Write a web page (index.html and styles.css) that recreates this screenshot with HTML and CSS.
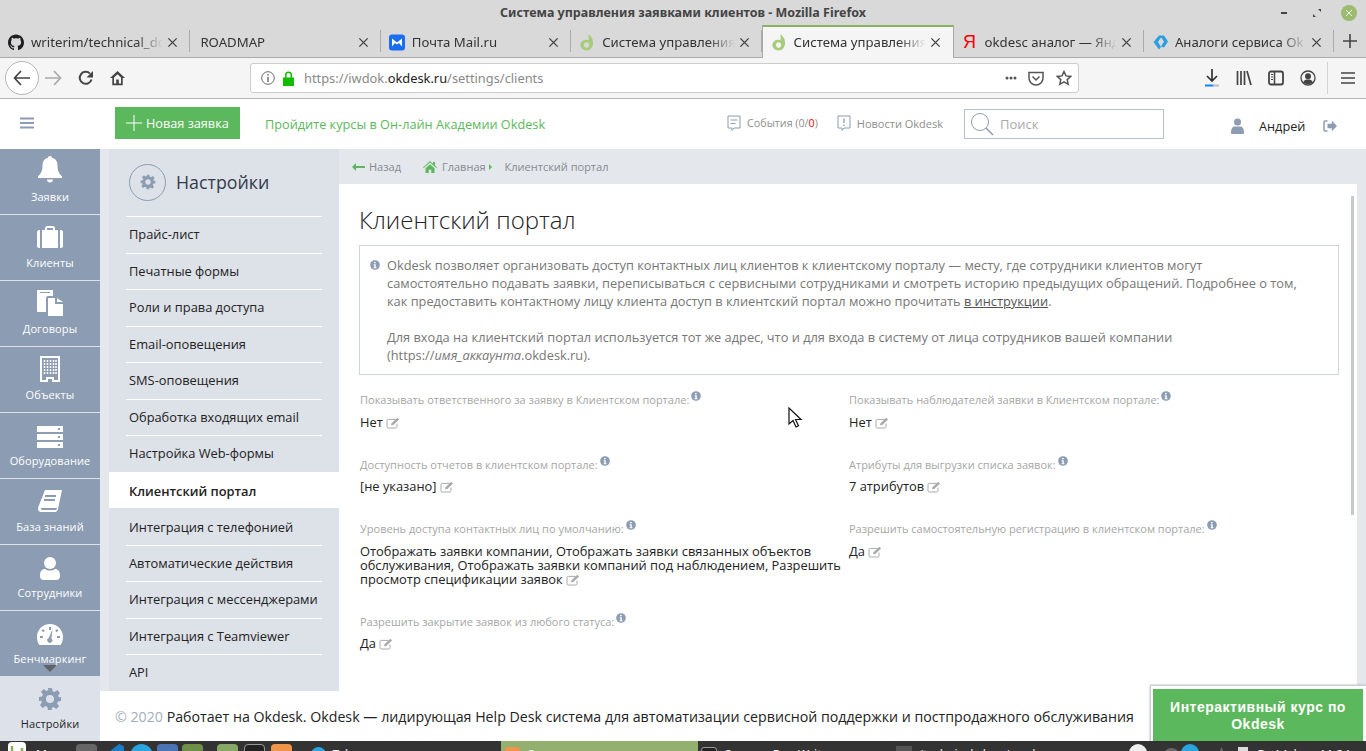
FILE: index.html
```html
<!DOCTYPE html>
<html lang="ru">
<head>
  <meta charset="UTF-8">
  <title>Система управления заявками клиентов</title>
  <link rel="stylesheet" href="styles.css">
</head>
<body>
  <svg class="sprite" width="0" height="0">
    <symbol id="i-close" viewBox="0 0 12 12"><path d="M1.5 1.5l9 9M10.5 1.5l-9 9" fill="none" stroke="currentColor" stroke-width="1.5"/></symbol>
    <symbol id="i-okdesk" viewBox="0 0 16 18"><path d="M9.5 0c1.800 1.600 5 4.600 5 9.300 0 4.700-3 8.200-7 8.200C4 17.500 1 15 1 11.700 1 8.300 4 6 7 6c1 0 1.900.2 2.600.7C9.900 4.500 9.700 2.300 9.500 0zM7.500 8.800c-1.500 0-2.700 1.300-2.700 2.900 0 1.700 1.200 3 2.800 3 1.500 0 2.700-1.300 2.700-3 0-1.600-1.200-2.900-2.800-2.900z" fill="#a9cc7c"/></symbol>
    <symbol id="i-info" viewBox="0 0 12 12"><circle cx="6" cy="6" r="5.800" fill="#8c9cb3"/><path d="M4.800 2.300h2v1.700h-2zM4.300 5h2.600v3.800h.9V10H4.300V8.800h.9V6.200h-.9z" fill="#fff"/></symbol>
    <symbol id="i-edit" viewBox="0 0 14 12"><path d="M9.800 2.400H2.300C1.500 2.400 1 2.900 1 3.700v6c0 .8.500 1.300 1.300 1.300h7.400c.8 0 1.300-.5 1.300-1.300V6.500" fill="none" stroke="#aaa"/><path d="M5 8.300l.5-2L11.300.8l1.800 1.700-5.800 5.400z" fill="#aaa"/></symbol>
    <symbol id="i-gear" viewBox="0 0 24 24"><path fill-rule="evenodd" d="M10 1h4l.6 3.200 1.900.8 2.700-1.900 2.800 2.800-1.900 2.700.8 1.900L23 10v4l-3.100.6-.8 1.900 1.900 2.700-2.800 2.800-2.700-1.900-1.900.8L13.900 23h-3.900l-.6-3.100-1.900-.8-2.700 1.900-2.800-2.800 1.900-2.700-.8-1.900L1 14v-4l3.100-.6.800-1.900L3 4.800 5.800 2l2.700 1.900 1.900-.8zM12 8a4 4 0 1 0 0 8 4 4 0 0 0 0-8z"/></symbol>
  </svg>

  <div class="titlebar">
    <span></span>
    <span class="titlebar-text">Система управления заявками клиентов - Mozilla Firefox</span>
    <div class="win-controls">
      <span class="win-min"></span>
      <svg class="win-restore" width="10" height="10" viewBox="0 0 10 10"><path d="M6 1h3v3zM4 9H1V6z" fill="#444"/></svg>
      <span class="win-close"><svg width="12" height="12"><use href="#i-close"/></svg></span>
    </div>
  </div>

  <div class="tabs">
    <div class="tab">
      <svg class="tab-icon" viewBox="0 0 16 16"><path fill="#1b1f23" d="M8 0C3.580 0 0 3.580 0 8c0 3.540 2.290 6.530 5.470 7.590.4.070.55-.17.55-.38 0-.19-.01-.82-.01-1.490-2.010.37-2.530-.49-2.690-.94-.09-.23-.48-.94-.82-1.130-.28-.15-.68-.52-.01-.53.63-.01 1.080.58 1.230.82.720 1.210 1.870.870 2.330.660.070-.520.280-.870.510-1.070-1.780-.2-3.640-.890-3.640-3.950 0-.870.310-1.590.820-2.150-.080-.2-.360-1.020.080-2.120 0 0 .670-.210 2.200.820.640-.180 1.320-.270 2-.270s1.360.090 2 .270c1.530-1.040 2.200-.820 2.200-.820.440 1.100.160 1.920.080 2.120.510.560.820 1.270.820 2.150 0 3.070-1.870 3.750-3.650 3.950.290.250.540.730.540 1.480 0 1.070-.010 1.930-.010 2.200 0 .210.150.460.550.380A8.010 8.010 0 0 0 16 8c0-4.420-3.580-8-8-8z"/></svg>
      <span class="tab-title">writerim/technical_do</span>
      <svg class="tab-close"><use href="#i-close"/></svg>
    </div>
    <div class="tab tab-noicon">
      <span class="tab-title">ROADMAP</span>
      <svg class="tab-close"><use href="#i-close"/></svg>
    </div>
    <div class="tab">
      <svg class="tab-icon" viewBox="0 0 16 16"><rect width="16" height="16" rx="3" fill="#1a6cf0"/><path d="M3 4l5 4 5-4v8l-3-3.500L8 10 6 8.500 3 12z" fill="#fff"/></svg>
      <span class="tab-title">Почта Mail.ru</span>
      <svg class="tab-close"><use href="#i-close"/></svg>
    </div>
    <div class="tab">
      <svg class="tab-icon"><use href="#i-okdesk"/></svg>
      <span class="tab-title">Система управления</span>
      <svg class="tab-close"><use href="#i-close"/></svg>
    </div>
    <div class="tab tab-active">
      <svg class="tab-icon"><use href="#i-okdesk"/></svg>
      <span class="tab-title">Система управления</span>
      <svg class="tab-close"><use href="#i-close"/></svg>
    </div>
    <div class="tab tab-after-active">
      <span class="tab-icon tab-yandex">Я</span>
      <span class="tab-title">okdesc аналог — Янд</span>
      <svg class="tab-close"><use href="#i-close"/></svg>
    </div>
    <div class="tab">
      <svg class="tab-icon" viewBox="0 0 16 16"><path d="M7 1h5l4 6-4 6-3-1 3-5-2.500-3.500H8.500L6 7.500l3 5-2 2.500L1.500 7.500z" fill="#2b9fe0"/></svg>
      <span class="tab-title">Аналоги сервиса Ok</span>
      <svg class="tab-close"><use href="#i-close"/></svg>
    </div>
    <div class="tab-new">
      <svg width="14" height="14" viewBox="0 0 14 14"><path d="M7 0v14M0 7h14" stroke="#444" stroke-width="1.600"/></svg>
    </div>
  </div>

  <div class="toolbar">
    <button class="nav-back">
      <svg width="18" height="16" viewBox="0 0 18 16"><path d="M8 1L1.500 8 8 15M1.500 8H17" fill="none" stroke="#444" stroke-width="1.700"/></svg>
    </button>
    <svg class="nav-forward" width="18" height="16" viewBox="0 0 18 16"><path d="M10 1l6.500 7L10 15M16.500 8H1" fill="none" stroke="#aaa" stroke-width="1.700"/></svg>
    <svg class="nav-reload" width="16" height="16" viewBox="0 0 16 16"><path d="M13.500 9.500A6 6 0 1 1 12 3.600" fill="none" stroke="#444" stroke-width="2"/><path d="M15 1v6.500H8.500z" fill="#444"/></svg>
    <svg class="nav-home" width="17" height="16" viewBox="0 0 17 16"><path d="M8.500 1L1 8h2.300v7.200h10.400V8H16zM5 13.500V7.500l3.500-3.300L12 7.500v6H9.800V9.500H7.200v4z" fill="#444" fill-rule="evenodd"/></svg>

    <div class="urlbar">
      <svg class="url-info" width="14" height="14" viewBox="0 0 14 14"><circle cx="7" cy="7" r="6.300" fill="none" stroke="#666"/><path d="M6.300 3h1.400v1.400H6.300zM6.300 5.800h1.400V11H6.300z" fill="#666"/></svg>
      <svg class="url-lock" width="13" height="15" viewBox="0 0 13 15"><path d="M1 6.500h11V15H1zM3 6.500V4a3.500 3.500 0 0 1 7 0v2.500H8.500V4a2 2 0 0 0-4 0v2.500z" fill="#12bc00"/></svg>
      <span class="url-text">https://iwdok.<b>okdesk.ru</b>/settings/clients</span>
      <svg class="url-dots" width="12" height="4" viewBox="0 0 12 4"><circle cx="2" cy="2" r="1.500" fill="#555"/><circle cx="6" cy="2" r="1.500" fill="#555"/><circle cx="10" cy="2" r="1.500" fill="#555"/></svg>
      <svg class="url-pocket" width="16" height="15" viewBox="0 0 16 15"><path d="M1 1.500h14v5.500a7 7 0 0 1-14 0z" fill="none" stroke="#555" stroke-width="1.500"/><path d="M4.500 5.500L8 9l3.500-3.500" fill="none" stroke="#555" stroke-width="1.500"/></svg>
      <svg class="url-star" width="16" height="16" viewBox="0 0 16 16"><path d="M8 1.500l2 4.400 4.800.5-3.600 3.200 1 4.700L8 11.900l-4.200 2.400 1-4.700L1.200 6.400 6 5.900z" fill="none" stroke="#555" stroke-width="1.500"/></svg>
    </div>

    <div class="tool-icons">
      <svg width="16" height="20" viewBox="0 0 16 20"><path d="M8 1v11M3 8l5 5 5-5" fill="none" stroke="#333" stroke-width="1.700"/><path d="M1 17.500h8.500" stroke="#0a84ff" stroke-width="2"/><path d="M9.500 17.500H15" stroke="#bbb" stroke-width="2"/></svg>
      <svg width="16" height="16" viewBox="0 0 16 16"><path d="M1.500 1v14M5 1v14M8.500 1v14M11 1l4 14" fill="none" stroke="#444" stroke-width="1.700"/></svg>
      <svg width="16" height="16" viewBox="0 0 16 16"><rect x="1" y="1.500" width="14" height="13" rx="2" fill="none" stroke="#444" stroke-width="1.800"/><path d="M6.500 2v12" stroke="#444" stroke-width="1.500"/><path d="M3 4.500h2M3 7h2M3 9.500h2" stroke="#444"/></svg>
      <svg width="16" height="16" viewBox="0 0 16 16"><circle cx="8" cy="8" r="7" fill="none" stroke="#444" stroke-width="1.300"/><circle cx="8" cy="6.200" r="3" fill="#444"/><path d="M3 12.500c1-2.500 3-3 5-3s4 .5 5 3c-2.500 2-7.500 2-10 0z" fill="#444"/></svg>
      <span class="tool-sep"></span>
      <svg width="14" height="12" viewBox="0 0 14 12"><path d="M0 1h14M0 6h14M0 11h14" stroke="#444" stroke-width="1.700"/></svg>
    </div>
  </div>

  <div class="app">
    <header class="app-header">
      <svg class="burger" width="14" height="12" viewBox="0 0 14 12"><path d="M0 1.500h14M0 6h14M0 10.500h14" stroke="#8c9cb3" stroke-width="2"/></svg>
      <a class="new-ticket">
        <svg width="16" height="16" viewBox="0 0 16 16"><path d="M8 0v16M0 8h16" stroke="#fff"/></svg>
        Новая заявка
      </a>
      <a class="academy-link">Пройдите курсы в Он-лайн Академии Okdesk</a>
      <a class="head-link head-events">
        <svg width="14" height="17" viewBox="0 0 14 17"><path d="M1 1h12v12H7l-2 2.500V13H1z" fill="none" stroke="#8c9cb3"/><path d="M3.500 5h7M3.500 8.500h5" stroke="#8c9cb3"/></svg>
        <span>События (0/<em>0</em>)</span>
      </a>
      <a class="head-link head-news">
        <svg width="14" height="17" viewBox="0 0 14 17"><path d="M1 1h12v12H7l-2 2.500V13H1z" fill="none" stroke="#8c9cb3"/><path d="M7 3.500V8M7 9.500v1.500" stroke="#8c9cb3" stroke-width="1.300"/></svg>
        <span>Новости Okdesk</span>
      </a>
      <div class="search">
        <svg width="24" height="24" viewBox="0 0 24 24"><circle cx="10" cy="10" r="8.500" fill="none" stroke="#8c9cb3"/><path d="M16 16l7 7" stroke="#8c9cb3" stroke-width="1.500"/></svg>
        <span>Поиск</span>
      </div>
      <svg class="user-icon" width="13" height="16" viewBox="0 0 13 16"><circle cx="6.500" cy="4" r="3.500" fill="#8c9cb3"/><path d="M0 15c0-5 2-6.500 3.500-6.500h6C11 8.500 13 10 13 15c0 .7-.5 1-1 1H1c-.5 0-1-.3-1-1z" fill="#8c9cb3"/></svg>
      <span class="user-name">Андрей</span>
      <svg class="logout" width="14" height="12" viewBox="0 0 14 12"><path d="M4.500 1H2C1.200 1 1 1.500 1 2v8c0 .5.200 1 1 1h2.500" fill="none" stroke="#8c9cb3" stroke-width="1.500"/><path d="M4.500 3.700h4.300V.8L14 6 8.800 11.200V8.300H4.500z" fill="#8c9cb3"/></svg>
    </header>

    <div class="app-body">
      <nav class="rail">
        <div class="rail-items">
          <a class="rail-item">
            <svg width="26" height="28" viewBox="0 0 26 28"><path d="M13 0c1.200 0 2 .8 2 1.800 3.700.8 5.500 3.700 5.500 7.700 0 6 2 8.500 4.500 11v1.500H1V20.500c2.500-2.500 4.500-5 4.500-11 0-4 1.800-6.900 5.500-7.700C11 .8 11.800 0 13 0zM10 23.500h6c0 1.700-1.300 3-3 3s-3-1.300-3-3z" fill="#fff"/></svg>
            <span>Заявки</span>
          </a>
          <a class="rail-item">
            <svg width="26" height="24" viewBox="0 0 26 24"><path d="M0 6c0-1 1-2 2-2h1v18H2c-1 0-2-1-2-2zM5 4h3V2c0-1 1-2 2-2h6c1 0 2 1 2 2v2h3v18H5zm5 0h6V2h-6zM23 4h1c1 0 2 1 2 2v14c0 1-1 2-2 2h-1z" fill="#fff" fill-rule="evenodd"/></svg>
            <span>Клиенты</span>
          </a>
          <a class="rail-item">
            <svg width="26" height="26" viewBox="0 0 26 26"><path d="M1 0h15v6H11C9.500 6 9 7 9 8v14H1c-.6 0-1-.4-1-1V1c0-.6.400-1 1-1z" fill="#fff"/><path d="M11 8h7v6h8v12H11zM20 8l6 4h-6z" fill="#fff"/><path d="M3 2.500h10" stroke="#8c9cb3"/></svg>
            <span>Договоры</span>
          </a>
          <a class="rail-item">
            <svg width="20" height="26" viewBox="0 0 20 26"><path fill-rule="evenodd" fill="#fff" d="M0 0h20v26H12v-3H8v3H0zM2 2v22h4v-3h8v3h4V2z"/><path d="M4.500 4v14M7.500 4v14M10.500 4v14M13.500 4v14M16 4v14" stroke="#fff" stroke-width="1.500" stroke-dasharray="2 1"/></svg>
            <span>Объекты</span>
          </a>
          <a class="rail-item">
            <svg width="26" height="22" viewBox="0 0 26 22"><path fill-rule="evenodd" fill="#fff" d="M0 0h26v6H0zM0 8h26v6H0zM0 16h26v6H0zM21 2v2h2V2zM21 10v2h2v-2zM21 18v2h2v-2z"/></svg>
            <span>Оборудование</span>
          </a>
          <a class="rail-item">
            <svg width="24" height="24" viewBox="0 0 24 24"><path fill-rule="evenodd" fill="#fff" d="M7 0h17l-4 19c-.3 1.500-1.200 3-3 3H3c-2 0-3-1.500-3-3 0-.8.300-1.800.5-2.500zM7 5v2h11V5zM6 9v2h11V9zM3 18.500c0 .8.500 1.500 1.500 1.500h13c.7 0 1.100-.5 1.300-1l.2-1H4.500c-1 0-1.500 0-1.500.5z"/></svg>
            <span>База знаний</span>
          </a>
          <a class="rail-item">
            <svg width="20" height="23" viewBox="0 0 20 23"><circle cx="10" cy="6" r="6" fill="#fff"/><path d="M0 19c0-5 2-7 5-7 1.500 1 3 1.500 5 1.500s3.500-.5 5-1.500c3 0 5 2 5 7 0 2.500-1.500 4-3.500 4h-13C1.500 23 0 21.500 0 19z" fill="#fff"/></svg>
            <span>Сотрудники</span>
          </a>
          <a class="rail-item rail-last">
            <svg width="26" height="22" viewBox="0 0 26 22"><path fill-rule="evenodd" fill="#fff" d="M13 0c7.200 0 13 5.800 13 13 0 3-.800 6-2.300 8H2.300C.8 19 0 16 0 13 0 5.800 5.800 0 13 0zM12 3v3h2V3zM6 5L4.600 6.400 6.400 8.200l1.400-1.400zM3 12v2h3v-2zM20 12v2h3v-2zM20 5l-1.800 1.800 1.400 1.400 1.800-1.800zM15.500 5l-3.700 9a2.500 2.500 0 1 0 2.600.400z"/></svg>
            <span>Бенчмаркинг</span>
            <i class="rail-more"></i>
          </a>
        </div>
        <a class="rail-item rail-settings">
          <svg width="24" height="24"><use href="#i-gear"/></svg>
          <span>Настройки</span>
        </a>
      </nav>

      <div class="workspace">
        <div class="workspace-row">
          <aside class="settings-col">
            <div class="settings-head">
              <span class="settings-badge"><svg width="16" height="16"><use href="#i-gear"/></svg></span>
              <span class="settings-title">Настройки</span>
            </div>
            <ul class="settings-list">
              <li>Прайс-лист</li>
              <li>Печатные формы</li>
              <li>Роли и права доступа</li>
              <li>Email-оповещения</li>
              <li>SMS-оповещения</li>
              <li>Обработка входящих email</li>
              <li>Настройка Web-формы</li>
              <li class="active">Клиентский портал</li>
              <li class="after-active">Интеграция с телефонией</li>
              <li>Автоматические действия</li>
              <li>Интеграция с мессенджерами</li>
              <li>Интеграция с Teamviewer</li>
              <li>API</li>
            </ul>
          </aside>

          <main class="page">
            <div class="crumbs">
              <svg class="crumb-back" width="13" height="8" viewBox="0 0 13 8"><path d="M4 0v3h9v2H4v3L0 4z" fill="#5cb85c"/></svg>
              <span>Назад</span>
              <svg class="crumb-home" width="14" height="12" viewBox="0 0 14 12"><path d="M7 0l3 2.700V1h2v3.500L14 6.400l-.7.700L7 1.500.7 7.100 0 6.400zM2.500 7.200L7 3.200l4.500 4V12H8.300V8.800H5.700V12H2.500z" fill="#5cb85c"/></svg>
              <span>Главная</span>
              <i class="crumb-arrow"></i>
              <span class="crumb-current">Клиентский портал</span>
            </div>

            <div class="page-body">
              <h1>Клиентский портал</h1>
              <div class="notice">
                <svg class="notice-icon" width="10" height="10"><use href="#i-info"/></svg>
                <p>Okdesk позволяет организовать доступ контактных лиц клиентов к клиентскому порталу — месту, где сотрудники клиентов могут<br>самостоятельно подавать заявки, переписываться с сервисными сотрудниками и смотреть историю предыдущих обращений. Подробнее о том,<br>как предоставить контактному лицу клиента доступ в клиентский портал можно прочитать <u>в инструкции</u>.</p>
                <p>Для входа на клиентский портал используется тот же адрес, что и для входа в систему от лица сотрудников вашей компании<br>(https://<i>имя_аккаунта</i>.okdesk.ru).</p>
              </div>

              <div class="fields">
                <div class="field">
                  <div class="field-label">Показывать ответственного за заявку в Клиентском портале:<svg class="hint"><use href="#i-info"/></svg></div>
                  <div class="field-value">Нет<svg class="edit"><use href="#i-edit"/></svg></div>
                </div>
                <div class="field">
                  <div class="field-label">Показывать наблюдателей заявки в Клиентском портале:<svg class="hint"><use href="#i-info"/></svg></div>
                  <div class="field-value">Нет<svg class="edit"><use href="#i-edit"/></svg></div>
                </div>
                <div class="field">
                  <div class="field-label">Доступность отчетов в клиентском портале:<svg class="hint"><use href="#i-info"/></svg></div>
                  <div class="field-value">[не указано]<svg class="edit"><use href="#i-edit"/></svg></div>
                </div>
                <div class="field">
                  <div class="field-label">Атрибуты для выгрузки списка заявок:<svg class="hint"><use href="#i-info"/></svg></div>
                  <div class="field-value">7 атрибутов<svg class="edit"><use href="#i-edit"/></svg></div>
                </div>
                <div class="field">
                  <div class="field-label">Уровень доступа контактных лиц по умолчанию:<svg class="hint"><use href="#i-info"/></svg></div>
                  <div class="field-value">Отображать заявки компании, Отображать заявки связанных объектов обслуживания, Отображать заявки компаний под наблюдением, Разрешить просмотр спецификации заявок<svg class="edit"><use href="#i-edit"/></svg></div>
                </div>
                <div class="field">
                  <div class="field-label">Разрешить самостоятельную регистрацию в клиентском портале:<svg class="hint"><use href="#i-info"/></svg></div>
                  <div class="field-value">Да<svg class="edit"><use href="#i-edit"/></svg></div>
                </div>
                <div class="field">
                  <div class="field-label">Разрешить закрытие заявок из любого статуса:<svg class="hint"><use href="#i-info"/></svg></div>
                  <div class="field-value">Да<svg class="edit"><use href="#i-edit"/></svg></div>
                </div>
              </div>
              <span class="scroll-thumb"></span>
            </div>
          </main>
        </div>

        <footer class="app-footer">
          <span class="copy">© 2020</span> Работает на Okdesk. Okdesk — лидирующая Help Desk система для автоматизации сервисной поддержки и постпродажного обслуживания
        </footer>
      </div>
    </div>

    <a class="course-btn"><span>Интерактивный курс по Okdesk</span></a>
  </div>

  <div class="taskbar">
    <svg class="tb-mint" width="18" height="18" viewBox="0 0 18 18"><rect width="18" height="18" rx="4" fill="#fff"/><path d="M4 4v8h10V6" fill="none" stroke="#87b158" stroke-width="2.500"/></svg>
    <span class="tb-text tb-menu">Меню</span>
    <span class="tb-app tb-gray"></span>
    <span class="tb-app tb-vscode"></span>
    <span class="tb-app tb-tele"></span>
    <span class="tb-app tb-blue"></span>
    <span class="tb-app tb-green"></span>
    <span class="tb-app tb-folder"></span>
    <span class="tb-app tb-term"></span>
    <span class="tb-app tb-orange"></span>
    <span class="tb-win tb-win-tele"><i class="tb-dot"></i>Telegram</span>
    <span class="tb-win tb-win-active"><i class="tb-sq"></i>Система управления</span>
    <span class="tb-win tb-win-term"><i class="tb-term-sm"></i>Скачать Ron Writer</span>
    <span class="tb-win tb-win-ff"><i class="tb-ff"></i>/technical_docs/roadmap</span>
    <div class="tray">
      <span class="tb-shield"></span>
      <span class="tb-round"></span>
      <span class="tb-tele-sm"></span>
      <span class="tb-speaker"></span>
      <span class="tb-batt"></span>
      <span class="tb-clock">Вт 14 фев, 11:24</span>
    </div>
  </div>

  <svg class="cursor" width="16" height="22" viewBox="0 0 16 22"><path d="M1 1v16l4-3.500 3 6.500 2.500-1.200-3-6.300H13z" fill="#fff" stroke="#111" stroke-width="1.200"/></svg>
</body>
</html>
```

FILE: styles.css
```css
* { box-sizing: border-box; }
html, body { margin: 0; height: 100%; overflow: hidden; }
body {
  display: flex;
  flex-direction: column;
  position: relative;
  height: 751px;
  font-family: "Open Sans", sans-serif;
  color: #222;
}
a { color: inherit; text-decoration: none; }
.sprite { position: absolute; }

/* окно браузера */
.titlebar {
  display: grid;
  grid-template-columns: 1fr auto 1fr;
  align-items: center;
  height: 25px;
  background: #d9d9d9;
  font-family: "Noto Sans", sans-serif;
}
.titlebar-text { font-size: 12.5px; font-weight: 700; color: #444; }
.win-controls { display: flex; align-items: center; justify-content: flex-end; padding-right: 9px; }
.win-min { width: 6px; height: 2px; background: #444; margin-right: 25px; }
.win-restore { margin-right: 19px; }
.win-close { width: 16px; height: 16px; border-radius: 50%; background: #9dbb70; color: #eef4e4; display: flex; align-items: center; justify-content: center; }
.win-close svg { width: 8px; height: 8px; }

.tabs {
  display: flex;
  height: 33px;
  background: #d9d9d9;
  border-bottom: 1px solid #aaa;
  font-family: "Noto Sans", sans-serif;
  font-size: 13.2px;
  color: #333;
}
.tab {
  width: 190.4px;
  display: flex;
  align-items: center;
  padding: 2px 12px 0 8px;
  position: relative;
}
.tab::after {
  content: "";
  position: absolute;
  right: 0;
  top: 5px;
  bottom: 5px;
  width: 1px;
  background: #aaa;
}
.tab-noicon { padding-left: 10px; }
.tab-icon { width: 16px; height: 17px; flex: none; margin-right: 7px; }
.tab-yandex { color: #f00; font-size: 18px; line-height: 17px; font-family: "Liberation Sans", sans-serif; text-align: center; margin-right: 7px; }
.tab-title {
  flex: 1;
  white-space: nowrap;
  overflow: hidden;
  -webkit-mask-image: linear-gradient(to right, #000 80%, transparent);
  mask-image: linear-gradient(to right, #000 80%, transparent);
}
.tab-close { width: 11px; height: 11px; flex: none; margin-left: 4px; color: #444; }
.tab-active {
  background: #f5f5f5;
  border-top: 2px solid #8ab063;
  border-left: 1px solid #aaa;
  border-right: 1px solid #aaa;
  margin-bottom: -1px;
  padding: 0 12px 1px 8px;
  height: 33px;
  width: 192px;
}
.tab-active::after { display: none; }
.tab-new { flex: 1; display: flex; align-items: center; justify-content: center; }

.toolbar {
  display: flex;
  align-items: center;
  height: 41px;
  background: #f5f5f5;
  border-bottom: 1px solid #b4b4b4;
  padding-left: 5px;
}
.nav-back {
  width: 34px;
  height: 34px;
  border-radius: 50%;
  border: 1px solid #b5b5b5;
  background: #fff;
  padding: 0;
  display: flex;
  align-items: center;
  justify-content: center;
}
.nav-forward { margin-left: 5px; }
.nav-reload { margin-left: 16px; }
.nav-home { margin-left: 15px; }
.urlbar {
  flex: none;
  width: 829px;
  height: 30px;
  margin-left: 124px;
  background: #fff;
  border: 1px solid #ccc;
  border-radius: 3px;
  display: flex;
  align-items: center;
  padding: 0 6px 0 10px;
}
.url-lock { margin-left: 7px; }
.url-text {
  margin-left: 9px;
  font-family: "Noto Sans", sans-serif;
  font-size: 12.85px;
  color: #8a8a8a;
}
.url-text b { font-weight: 400; color: #222; }
.url-dots { margin-left: auto; }
.url-pocket { margin-left: 11px; }
.url-star { margin-left: 12px; }
.tool-icons {
  display: flex;
  align-items: center;
  gap: 16px;
  margin-left: 125px;
}
.tool-sep { width: 1px; height: 32px; background: #d4d4d4; margin: 0 -3px 0 -5px; }

/* приложение */
.app { flex: 1; min-height: 0; display: flex; flex-direction: column; position: relative; overflow: hidden; }
.app-header { display: flex; align-items: center; height: 50px; flex: none; padding: 0 0 2px 20px; background: #fff; }
.new-ticket {
  display: flex;
  align-items: center;
  gap: 4px;
  width: 125px;
  height: 32px;
  margin-left: 81px;
  padding-left: 11px;
  background: #5cb85c;
  color: #fff;
  font-size: 12.7px;
}
.academy-link { margin: 2px 0 0 25px; font-size: 12.73px; color: #5cb85c; }
.head-link { display: flex; align-items: center; gap: 6px; font-size: 11px; color: #8e8e8e; }
.head-link em { font-style: normal; color: #f00; }
.head-events { margin-left: 182px; font-size: 10.7px; }
.head-news { margin-left: 19px; }
.search {
  display: flex;
  align-items: center;
  gap: 6px;
  width: 200px;
  height: 30px;
  margin: 1px 0 0 21px;
  padding-left: 5px;
  border: 1px solid #b5c1d1;
  font-size: 13px;
  color: #a9a9a9;
}
.user-icon { margin: 6px 0 0 67px; }
.user-name { margin: 6px 0 0 15px; font-size: 12.7px; color: #222; }
.logout { margin: 6px 0 0 18px; }

.app-body { flex: 1; min-height: 0; display: flex; }
.rail { width: 100px; flex: none; display: flex; flex-direction: column; background: #8c9cb3; }
.rail-items { flex: 1; display: flex; flex-direction: column; }
.rail-item {
  height: 66px;
  border-bottom: 1px solid #dde2ea;
  display: flex;
  flex-direction: column;
  align-items: center;
  justify-content: flex-end;
  padding-bottom: 10px;
  color: #fff;
  font-size: 11px;
  letter-spacing: 0.1px;
  position: relative;
}
.rail-item svg { flex: none; margin-bottom: 5px; }
.rail-item span { line-height: 15px; }
.rail-last { border-bottom: 0; height: 65px; }
.rail-more {
  position: absolute;
  left: 43px;
  bottom: 4px;
  border: 7px solid transparent;
  border-top-color: #5f6469;
  border-bottom: 0;
}
.rail-settings {
  background: #dde2ea;
  border-bottom: 0;
  color: #222;
  flex: none;
  padding-bottom: 11px;
}
.rail-settings svg { fill: #8c9cb3; }

.workspace { flex: 1; min-width: 0; display: flex; flex-direction: column; }
.workspace-row { flex: 1; min-height: 0; display: flex; background: #e4e8ed; }
.settings-col { width: 230px; flex: none; margin-left: 9px; background: #dde1e8; }
.settings-head { display: flex; align-items: center; height: 67px; padding: 0 0 1px 20px; }
.settings-badge {
  width: 37px;
  height: 37px;
  border: 1px solid #8c9cb3;
  border-radius: 50%;
  display: flex;
  align-items: center;
  justify-content: center;
  fill: #8c9cb3;
}
.settings-title { margin-left: 10px; font-size: 17.8px; color: #333c4b; }
.settings-list { list-style: none; margin: 0; padding: 0; font-size: 12.85px; color: #222; }
.settings-list li {
  height: 36.5px;
  line-height: 35.5px;
  margin: 0 17px;
  padding-left: 3px;
  border-top: 1px solid #fff;
}
.settings-list li.active {
  margin: 0;
  padding-left: 20px;
  background: #fff;
  font-weight: 600;
  line-height: 38px;
  border-top: 0;
}
.settings-list li.after-active { border-top: 0; line-height: 38px; }

.page { flex: 1; min-width: 0; display: flex; flex-direction: column; padding-right: 9px; }
.crumbs {
  display: flex;
  align-items: center;
  height: 35px;
  flex: none;
  margin-right: -9px;
  padding-left: 13px;
  font-size: 11px;
  color: #858a90;
}
.crumb-back { margin-right: 4px; }
.crumb-home { margin-left: 22px; margin-right: 5px; }
.crumb-arrow {
  margin: 0 13px 0 3px;
  border: 3px solid transparent;
  border-left-color: #5cb85c;
  border-right: 0;
}
.page-body {
  flex: 1;
  min-height: 0;
  background: #fff;
  padding: 0 9px 0 20px;
  position: relative;
}
.page-body h1 { margin: 20px 0 10px; font-size: 24px; line-height: 31px; font-weight: 300; color: #222; }
.notice {
  height: 130px;
  width: 980px;
  border: 1px solid #cfd3da;
  padding: 10px 10px 0 27px;
  position: relative;
  font-size: 12.8px;
  line-height: 18px;
  color: #777;
}
.notice p { margin: 0 0 18px; white-space: nowrap; }
.notice i { color: #777; }
.notice u { color: #555; }
.notice-icon { position: absolute; left: 10px; top: 14px; }
.fields {
  display: grid;
  grid-template-columns: 489px 1fr;
  padding: 15px 0 0 1px;
}
.field { padding-bottom: 26px; }
.field-label { height: 18px; line-height: 20px; margin-bottom: 6.5px; font-size: 11px; color: #a6a6a6; white-space: nowrap; }
.hint { width: 10px; height: 10px; margin-left: 2px; position: relative; top: -3px; }
.field-value { width: 481px; font-size: 12.85px; line-height: 14px; color: #222; }
.edit { width: 14px; height: 12px; margin-left: 3px; vertical-align: -2px; }
.scroll-thumb {
  position: absolute;
  right: 3px;
  top: 12px;
  width: 3px;
  height: 319px;
  background: #c9c9c9;
}
.app-footer {
  height: 50px;
  flex: none;
  padding: 16px 0 0 15px;
  background: #fff;
  font-size: 14.2px;
  line-height: 19px;
  color: #222;
  white-space: nowrap;
}
.copy { color: #a3aebd; }

.course-btn {
  position: absolute;
  right: 0;
  top: 586px;
  width: 216px;
  height: 72px;
  padding: 3px 3px 0 2px;
  background: #fff;
  border: 1px solid #c9ced6;
  border-right: 0;
  box-shadow: 0 0 2px #aaa;
}
.course-btn span {
  display: block;
  height: 100%;
  padding: 10px 15px 0;
  background: #5cb85c;
  color: #fff;
  font-family: "Liberation Sans", sans-serif;
  font-size: 14px;
  font-weight: 700;
  line-height: 17px;
  letter-spacing: 0.5px;
  text-align: center;
}

/* панель задач, видна только верхняя кромка */
.taskbar {
  display: flex;
  height: 10px;
  flex: none;
  background: #333;
  overflow: hidden;
  padding-left: 8px;
  position: relative;
  color: #eee;
  font-family: "Noto Sans", sans-serif;
  font-size: 12px;
}
.tb-mint { flex: none; margin-top: 1px; }
.tb-text { margin-left: 10px; line-height: 28px; }
.tb-menu { width: 35px; }
.tb-app { flex: none; width: 21px; height: 24px; border-radius: 4px; margin: 3px 0 0 6px; }
.tb-gray { background: #666; }
.tb-vscode { background: #1c7cc4; clip-path: polygon(0 50%, 75% 0, 100% 10%, 100% 100%, 0 100%); }
.tb-tele { background: #2ba3de; border-radius: 50%; width: 23px; }
.tb-blue { background: #4a74b4; margin-left: 4px; }
.tb-green { background: #6f8f48; margin-left: 4px; }
.tb-folder { background: #87a968; margin-left: 14px; }
.tb-term { background: #222; border: 1px solid #999; }
.tb-orange { background: #f0944a; }
.tb-win { flex: none; display: flex; gap: 6px; line-height: 28px; white-space: nowrap; overflow: hidden; }
.tb-win-tele { width: 190px; margin-left: 19px; }
.tb-win-active { width: 197px; background: #93b070; padding-left: 4px; }
.tb-win-term { width: 198px; padding-left: 3px; }
.tb-win-ff { width: 233px; }
.tb-dot { width: 15px; height: 15px; margin-top: 6px; border-radius: 50%; background: #2ba3de; flex: none; }
.tb-sq { width: 15px; height: 16px; margin-top: 6px; border-radius: 3px; background: #f0944a; flex: none; }
.tb-term-sm { width: 16px; height: 16px; margin-top: 6px; border: 1px solid #999; border-radius: 3px; background: #222; flex: none; }
.tb-ff { width: 16px; height: 16px; margin-top: 5px; background: #555; flex: none; }
.tray { display: flex; flex: none; margin-left: auto; padding-right: 6px; line-height: 28px; }
.tb-shield { width: 18px; height: 16px; margin-top: 3px; background: #eee; border-radius: 9px 9px 0 0; }
.tb-round { width: 17px; height: 17px; margin: 7px 0 0 16px; background: #666; border-radius: 50%; }
.tb-tele-sm { width: 18px; height: 18px; margin: 3px 0 0 1px; background: #2ba3de; border-radius: 50%; }
.tb-speaker { width: 12px; height: 14px; margin: 6px 0 0 16px; background: #666; clip-path: polygon(50% 0, 100% 100%, 0 100%); }
.tb-batt { width: 10px; height: 14px; margin: 6px 0 0 11px; background: #ddd; }
.tb-clock { width: 104px; margin-left: 9px; }

.cursor { position: absolute; left: 788px; top: 407px; }
```
